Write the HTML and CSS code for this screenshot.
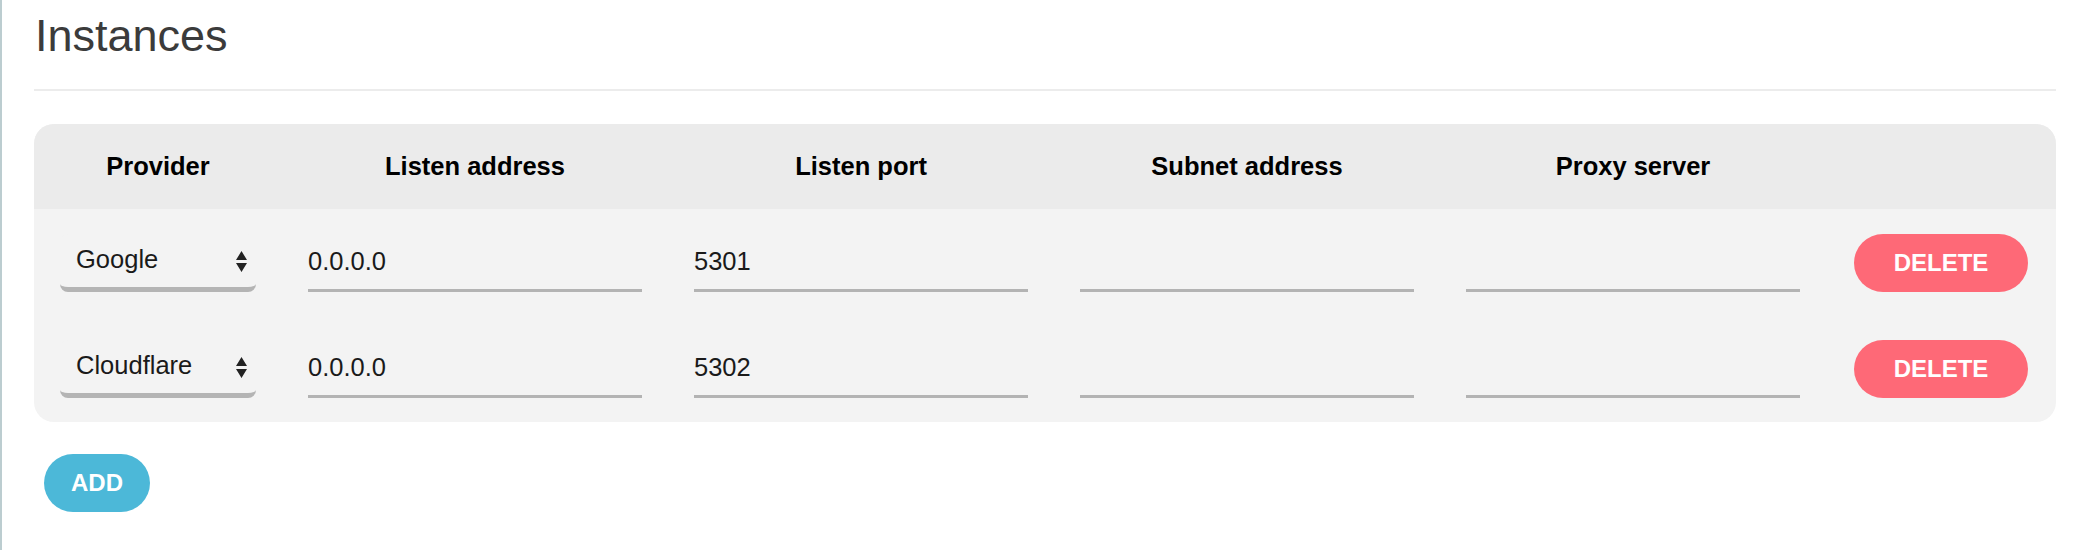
FILE: index.html
```html
<!DOCTYPE html>
<html lang="en">
<head>
<meta charset="utf-8">
<title>Instances</title>
<link rel="stylesheet" href="styles.css">
</head>
<body>
<div class="page">
  <div class="title-bar">
    <h1 class="title">Instances</h1>
  </div>

  <div class="card">
    <div class="grid head">
      <div class="th">Provider</div>
      <div class="th">Listen address</div>
      <div class="th">Listen port</div>
      <div class="th">Subnet address</div>
      <div class="th">Proxy server</div>
      <div class="th"></div>
    </div>
    <div class="body">
      <div class="grid row">
        <div class="select-wrap">
          <select class="select"><option>Google</option><option>Cloudflare</option></select>
          <svg class="arrows" width="11" height="21" viewBox="0 0 11 21"><path d="M0 9 L5.5 0 L11 9 Z M0 12 L11 12 L5.5 21 Z" fill="#222"/></svg>
        </div>
        <input class="field" type="text" value="0.0.0.0">
        <input class="field" type="text" value="5301">
        <input class="field" type="text" value="">
        <input class="field" type="text" value="">
        <button class="btn btn-delete">DELETE</button>
      </div>
      <div class="grid row">
        <div class="select-wrap">
          <select class="select"><option>Cloudflare</option><option>Google</option></select>
          <svg class="arrows" width="11" height="21" viewBox="0 0 11 21"><path d="M0 9 L5.5 0 L11 9 Z M0 12 L11 12 L5.5 21 Z" fill="#222"/></svg>
        </div>
        <input class="field" type="text" value="0.0.0.0">
        <input class="field" type="text" value="5302">
        <input class="field" type="text" value="">
        <input class="field" type="text" value="">
        <button class="btn btn-delete">DELETE</button>
      </div>
    </div>
  </div>

  <div class="actions">
    <button class="btn btn-add">ADD</button>
  </div>
</div>
</body>
</html>
```

FILE: styles.css
```css
html, body {
  margin: 0;
  padding: 0;
  background: #ffffff;
}

body {
  font-family: "Liberation Sans", Arial, sans-serif;
  color: #222;
}

.page {
  border-left: 2px solid #bccdd0;
  min-height: 550px;
  box-sizing: border-box;
  padding: 0 26px 0 32px;
}

.title-bar {
  padding-top: 10px;
  padding-bottom: 27px;
  border-bottom: 2px solid #ececec;
}

.title {
  margin: 0;
  font-size: 45px;
  line-height: 52px;
  font-weight: 400;
  color: #3b3b3b;
  padding-left: 1px;
}

.card {
  margin-top: 33px;
  border-radius: 20px;
  overflow: hidden;
  background: #f3f3f3;
}

.grid {
  display: grid;
  grid-template-columns: 196px repeat(4, 334px) 1fr;
  column-gap: 52px;
  padding: 0 28px 0 26px;
  align-items: center;
}

.head {
  background: #ebebeb;
  height: 85px;
}

.th {
  text-align: center;
  font-weight: 700;
  font-size: 25.5px;
  color: #000;
}

.body {
  padding: 25px 0 24px;
  display: flex;
  flex-direction: column;
  gap: 48px;
}

.row {
  height: 58px;
}

.select-wrap {
  position: relative;
  height: 58px;
}

.select {
  appearance: none;
  -webkit-appearance: none;
  width: 100%;
  height: 58px;
  box-sizing: border-box;
  border: none;
  border-bottom: 5px solid #b4b4b4;
  border-radius: 8px;
  background: #f3f3f3;
  padding: 0 0 4px 16px;
  font-family: "Liberation Sans", Arial, sans-serif;
  font-size: 25.5px;
  color: #1a1a1a;
  outline: none;
}

.arrows {
  position: absolute;
  left: 176px;
  top: 17px;
  pointer-events: none;
}

.field {
  width: 100%;
  height: 58px;
  box-sizing: border-box;
  border: none;
  border-bottom: 3px solid #b3b3b3;
  background: transparent;
  padding: 0;
  font-family: "Liberation Sans", Arial, sans-serif;
  font-size: 25.5px;
  color: #1a1a1a;
  outline: none;
}

.btn {
  height: 58px;
  border: none;
  border-radius: 29px;
  color: #fff;
  font-family: "Liberation Sans", Arial, sans-serif;
  font-weight: 700;
  font-size: 24px;
  padding: 0;
  cursor: pointer;
}

.btn-delete {
  width: 174px;
  background: #fe6977;
  justify-self: end;
}

.actions {
  margin-top: 32px;
  padding-left: 10px;
}

.btn-add {
  width: 106px;
  background: #4cb8d8;
}
```
